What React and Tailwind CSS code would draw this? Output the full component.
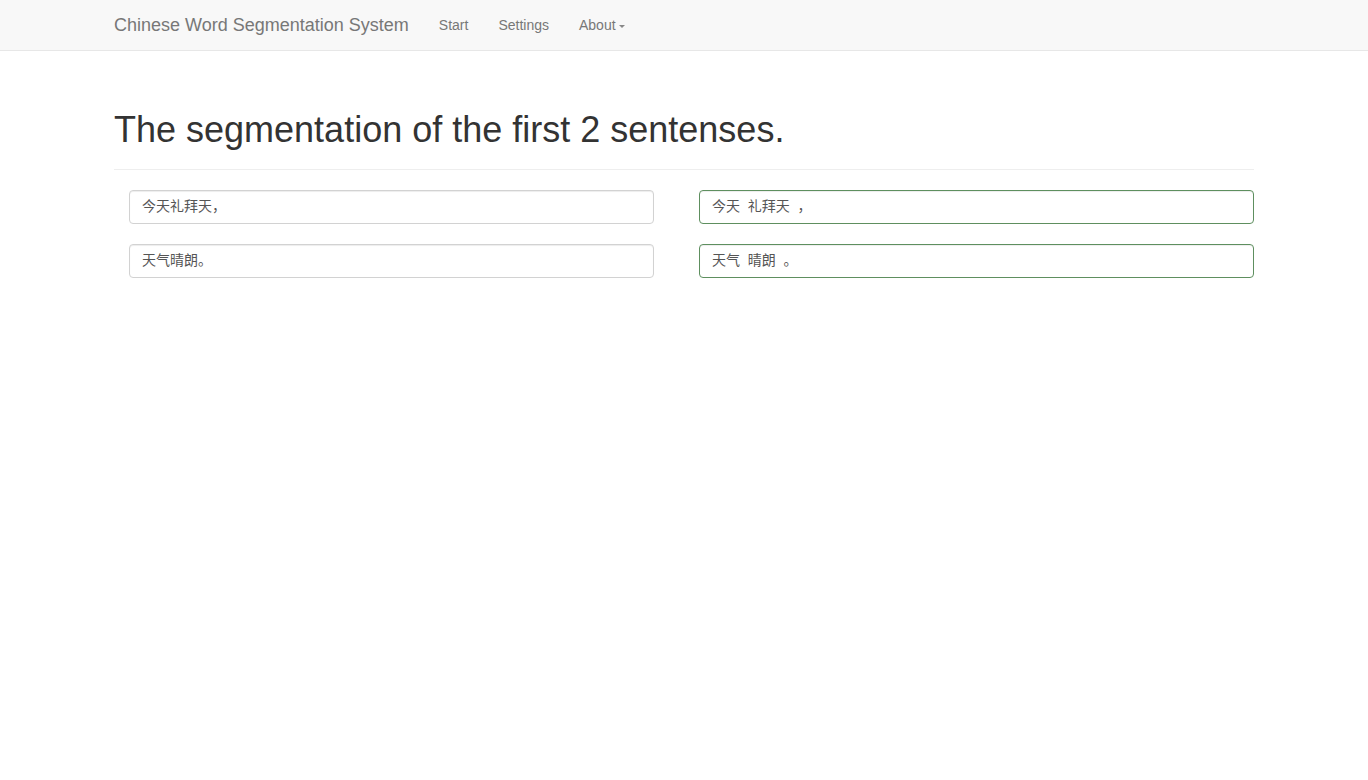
import React from "react";

const font = { fontFamily: '"Liberation Sans", Arial, "Noto Sans CJK SC", sans-serif' };

function Caret() {
  return (
    <span className="inline-block ml-[3px] mt-[2px] w-0 h-0 border-t-[3px] border-t-[#888] border-x-[3px] border-x-transparent" />
  );
}

function Field({ text, success }) {
  return (
    <div
      className={
        "h-[34px] rounded-[4px] border px-[12px] flex items-center text-[14px] text-[#555] bg-white shadow-[inset_0_1px_1px_rgba(0,0,0,0.075)] " +
        (success ? "border-[#5e8f5f]" : "border-[#d2d2d2]")
      }
    >
      <span className="whitespace-pre">{text}</span>
    </div>
  );
}

export default function App() {
  return (
    <div className="min-h-[780px] bg-white text-[#333]" style={font}>
      <nav className="h-[51px] bg-[#f8f8f8] border-b border-[#e7e7e7]">
        <div className="max-w-[1170px] mx-auto px-[15px] h-full flex items-center">
          <span className="text-[18px] text-[#777] leading-[20px]">Chinese Word Segmentation System</span>
          <div className="flex items-center ml-[15px] text-[14px] text-[#777]">
            <span className="px-[15px]">Start</span>
            <span className="px-[15px]">Settings</span>
            <span className="px-[15px] flex items-center">About<Caret /></span>
          </div>
        </div>
      </nav>
      <div className="max-w-[1170px] mx-auto px-[15px]">
        <div className="mt-[59px] pb-[9px] border-b border-[#eee] mb-[20px]">
          <h1 className="text-[36px] leading-[39.6px] mb-[10px] text-[#333]">The segmentation of the first 2 sentenses.</h1>
        </div>
        <div className="grid grid-cols-2 gap-x-[30px] gap-y-[20px]">
          <div className="px-[15px]"><Field text="今天礼拜天，" /></div>
          <div><Field text="今天  礼拜天  ，" success /></div>
          <div className="px-[15px]"><Field text="天气晴朗。" /></div>
          <div><Field text="天气  晴朗  。" success /></div>
        </div>
      </div>
    </div>
  );
}
